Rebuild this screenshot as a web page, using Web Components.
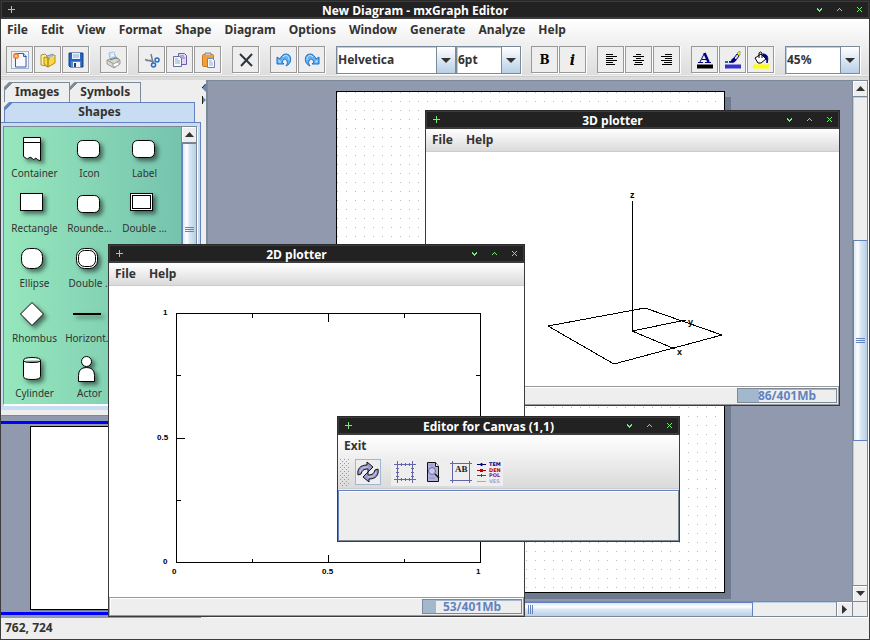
<!DOCTYPE html>
<html lang="en">
<head>
<meta charset="utf-8">
<title>New Diagram - mxGraph Editor</title>
<style>
html, body { margin: 0; height: 100%; overflow: hidden; }
body { font: bold 12px/16px "Noto Sans", "Open Sans", sans-serif; color: #333; background: #eee; position: relative;
  --edge: #3c3c3c; --line: #7a8a99; --blue: #6382bf; --sky: #c8ddf2; --desk: #9099ae; }
#main { height: 100%; }
#plot3d, #plot2d, #canvas { position: absolute; }
#plot3d { left: 425px; top: 110px; width: 415px; height: 296px; }
#plot2d { left: 108px; top: 244px; width: 417px; height: 373px; }
#canvas { left: 337px; top: 416px; width: 343px; height: 126px; }
</style>
</head>
<body>
<mx-window id="main" caption="New Diagram - mxGraph Editor"><mx-editor></mx-editor></mx-window>
<mx-window id="plot3d" caption="3D plotter">
  <mx-menubar items="File,Help" compact></mx-menubar>
  <mx-plot3d></mx-plot3d>
  <mx-memory used="86" total="401"></mx-memory>
</mx-window>
<mx-window id="plot2d" caption="2D plotter">
  <mx-menubar items="File,Help" compact></mx-menubar>
  <mx-plot2d></mx-plot2d>
  <mx-memory used="53" total="401"></mx-memory>
</mx-window>
<mx-window id="canvas" caption="Editor for Canvas (1,1)"><mx-canvas-editor></mx-canvas-editor></mx-window>

<script>
const base = `:host,*{box-sizing:border-box}button{font:inherit;color:inherit;margin:0;padding:0;border:0;background:none}svg{display:block}`;
function define(name, css, html) {
  customElements.define(name, class extends HTMLElement {
    constructor() { super(); this.attachShadow({ mode: "open" }); }
    connectedCallback() {
      const body = typeof html === "function" ? html(this) : html;
      this.shadowRoot.innerHTML = `<style>${base}${css}</style>${body}`;
    }
  });
}

define("mx-window", `
:host{display:flex;flex-direction:column;border:1px solid var(--edge);border-top:0;background:#eee}
header{display:flex;align-items:center;height:19px;flex:none;margin:0 -1px;background:#222;border:1px solid #2a2a2a;border-bottom-color:var(--edge);box-shadow:inset 0 0 0 1px var(--edge);color:#fff}
h1{flex:1;margin:0;font:bold 12px/16px "Open Sans","Noto Sans",sans-serif;text-align:center;padding-top:3px;white-space:nowrap}
button{width:20px;height:17px;display:grid;place-items:center;color:#7be87b}
main{flex:1;min-height:0;display:flex;flex-direction:column}`,
el => {
  const b = (n, d) => `<button aria-label="${n}"><svg width="9" height="9" fill="none" stroke="currentColor" shape-rendering="crispEdges"><path d="${d}"/></svg></button>`;
  return `<header>${b("Stick", "M4.500 1v7M1 4.500h7")}<h1>${el.getAttribute("caption")}</h1>
  ${b("Minimize", "M2 3.500l2.500 2.500l2.500-2.500")}${b("Maximize", "M2 6l2.500-2.500l2.500 2.500")}${b("Close", "M2 2l5 5M7 2l-5 5")}</header><main><slot></slot></main>`;
});

define("mx-menubar", `
:host{display:flex;gap:13px;padding:0 6px;height:22px;align-items:center;flex:none}
:host([compact]){height:23px;background:linear-gradient(#fff,#dadada);border-bottom:1px solid #ccc}
button{white-space:nowrap}`,
el => el.getAttribute("items").split(",").map(t => `<button>${t}</button>`).join(""));

define("mx-memory", `
:host{display:flex;justify-content:flex-end;align-items:center;height:19px;flex:none;border:1px solid #999;border-left-color:#aaa;box-shadow:inset 1px 1px #fff;padding:1px;background:#eee}
div{width:100px;height:15px;border:1px solid var(--line);box-shadow:inset 1px 1px #a3b8cc;color:var(--blue);text-align:center;line-height:14px;}`,
el => {
  const u = +el.getAttribute("used"), t = +el.getAttribute("total"), p = u / t * 100;
  return `<div role="progressbar" aria-label="Memory" aria-valuenow="${u}" aria-valuemax="${t}" style="background:linear-gradient(90deg,#a3b8cc ${p}%,#eee ${p}%)">${u}/${t}Mb</div>`;
});

define("mx-plot3d", `
:host{display:block;flex:1;min-height:0;background:#fff}
svg{width:100%;height:100%}text{font:bold 9px "Liberation Sans",sans-serif}`, `
<svg viewBox="426 152 413 234" fill="none" stroke="#000" shape-rendering="crispEdges">
<path d="M632.500 201V331M548 326L645 308L722 335L614 364ZM632 331L686 320M632 331L675 349"/>
<g fill="#000" stroke="none"><text x="630" y="198">z</text><text x="688" y="325">y</text><text x="677" y="355">x</text></g></svg>`);

define("mx-plot2d", `
:host{display:block;flex:1;min-height:0;background:#fff}
svg{width:100%;height:100%}text{font:bold 8px "Liberation Sans",sans-serif}`, `
<svg viewBox="109 286 415 311" fill="none" stroke="#000" shape-rendering="crispEdges">
<path d="M176.500 313.500h304v249h-304zM252.500 313v5M328.500 313v9M404.500 313v5M252.500 563v-4M328.500 563v-8M404.500 563v-4M176 375.500h5M176 438.500h9M176 500.500h5M481 375.500h-5M481 438.500h-9M481 500.500h-5"/>
<g fill="#000" stroke="none"><text x="163" y="315">1</text><text x="157" y="440">0.5</text><text x="163" y="564">0</text>
<text x="172" y="574">0</text><text x="322" y="574">0.5</text><text x="476" y="574">1</text></g></svg>`);

const icons = {
  "New": `<rect x=".5" y=".5" width="17" height="17" fill="#eef3fa" stroke="#9db2d0"/><path d="M4.500 2.500h8l2.500 2.500v11h-10.500z" fill="#f8faff" stroke="#405a98"/><path d="M12.500 2.500v3h3" fill="#c2d2ee" stroke="#405a98"/><circle cx="5" cy="5" r="3" fill="#f76432" fill-opacity=".85"/><circle cx="5" cy="5" r="1.500" fill="#ffd64a"/>`,
  "Open": `<path d="M2 4l4-1l2 2v10l-6-1z" fill="#fff0a8" stroke="#b28e20"/><path d="M8 5l6-2v9l-6 4z" fill="#aebfd8" stroke="#8392ae"/><path d="M5 6l4 1v9l-4-3zM9 7l2 1l5-4v8l-7 4z" fill="#fbd848" stroke="#b48d12"/><path d="M11 8l4-3" stroke="#fff6ba"/>`,
  "Save": `<path d="M2 2h14v14H3l-1-1z" fill="#2764c0" stroke="#164187"/><rect x="5" y="2" width="8" height="6" fill="#eaf2fc"/><path d="M6 4h6M6 6h6" stroke="#8fa9cc"/><rect x="4" y="10" width="10" height="6" fill="#5b89c8"/><rect x="6" y="11" width="7" height="5" fill="#f4f4f4"/><rect x="7" y="12" width="2" height="4" fill="#173f7f"/>`,
  "Print": `<path d="M5 8l-1-6l5-1l2 6z" fill="#c9e0f8" stroke="#9cc0e4"/><path d="M6 3l3-1M6 5l3-1" stroke="#fff"/><path d="M2 9l9-3l4 3v4l-6 4l-7-4z" fill="#d6d6d2" stroke="#a0a09a"/><path d="M2 9l7 4l6-4M9 13v4" stroke="#9a9a94"/><path d="M7 14l5-3l3 2l-5 3z" fill="#fff" stroke="#aaa"/><path d="M5 9l6-2l2 1" stroke="#777"/>`,
  "Cut": `<path d="M2 8.500l9 2.500M8 3l2 9M3 9.500h5" stroke="#747f89" stroke-width="1.500"/><circle cx="14" cy="9" r="2" stroke="#2769c4" stroke-width="1.500"/><circle cx="10.500" cy="14" r="2" stroke="#2769c4" stroke-width="1.500"/>`,
  "Copy": `<path d="M7.500 2.500h6l2 2v9h-8z" fill="#dcdaf3" stroke="#705ba5"/><path d="M9 5h4M9 7h5" stroke="#8474b4"/><path d="M2.500 5.500h6l2 2v8h-8z" fill="#f6faff" stroke="#5b70a5"/><path d="M4 8h3M4 10h5M4 12h5" stroke="#91a5ca"/>`,
  "Paste": `<rect x="3.500" y="3.500" width="11" height="12" rx="1" fill="#f0a13c" stroke="#c87a25"/><path d="M6 4V2h6v2" fill="#ccc" stroke="#888"/><path d="M8.500 7.500h5l2 2v7h-7z" fill="#f4f8ff" stroke="#6d84ab"/><path d="M10 10h3M10 12h4M10 14h4" stroke="#9bb0d0"/>`,
  "Delete": `<path d="M3 3l12 12M15 3L4 15" stroke="#2d353d" stroke-width="2"/>`,
  "Undo": `<path d="M2 6v7h7l-2-2c1-3 4-4 5-1c1 2 0 3-1 5c5-2 6-8 3-11c-3-2-7-1-9 4z" fill="#62b1f4" stroke="#1c6fc2"/><path d="M4 9v2h2M8 6c3-3 6-1 6 3" stroke="#c4e6ff"/>`,
  "Redo": `<path d="M16 6v7H9l2-2c-1-3-4-4-5-1c-1 2 0 3 1 5c-5-2-6-8-3-11c3-2 7-1 9 4z" fill="#62b1f4" stroke="#1c6fc2"/><path d="M14 9v2h-2M10 6C7 3 4 5 4 9" stroke="#c4e6ff"/>`,
  "Align left": `<path d="M4 3.500h7M4 5.500h11M4 7.500h7M4 9.500h11M4 11.500h7M4 13.500h9" stroke="#000" shape-rendering="crispEdges"/>`,
  "Align center": `<path d="M6 3.500h5M3 5.500h11M6 7.500h5M3 9.500h11M5 11.500h7M4 13.500h9" stroke="#000" shape-rendering="crispEdges"/>`,
  "Align right": `<path d="M7 3.500h7M3 5.500h11M7 7.500h7M3 9.500h11M6 11.500h8M4 13.500h10" stroke="#000" shape-rendering="crispEdges"/>`,
  "Font color": `<path d="M1 13.500h16v4H1z" fill="#000"/><path d="M2 11.500h5M9 11.500h6M4 11L8.500 2M6 8.500h5" stroke="#000080"/><path d="M8.500 2L12.500 11" stroke="#000080" stroke-width="2.500"/>`,
  "Line color": `<path d="M1 13.500h16v4H1z" fill="#3333cc"/><path d="M1 11h3" stroke="#008080" stroke-width="2"/><path d="M5 11c3 0 2-3 5-4l2 2c-1 2-3 3-7 2z" fill="#000080" stroke="#000080"/><path d="M10 7l3-4l2 2l-3 4z" fill="#ddd" stroke="#000080"/><path d="M13 2l3-2v4l-1 1z" fill="#ff0" stroke="#665f00" stroke-width=".5"/>`,
  "Fill color": `<path d="M1 13.500h16v4H1z" fill="#ff0"/><path d="M3 7l6-4l5 5l-5 4h-3z" fill="#fff" stroke="#000"/><path d="M7 7V2q1.500-2 3 0v5" stroke="#000"/><path d="M11 3c4 0 6 3 4 9c0-4-1-5-4-7z" fill="#000080" stroke="#000080"/>`
};
define("mx-tool", `
:host{display:block;flex:none}
button{width:27px;height:27px;display:grid;place-items:center;border:1px solid #999;background:#eee;box-shadow:1px 1px #fff;color:#000}
b,i{font:bold 12px/16px "DejaVu Serif",serif;color:#000}i{font-style:italic;font-size:14px}`,
el => {
  const n = el.getAttribute("name");
  const art = n === "Bold" ? `<b>B</b>` : n === "Italic" ? `<i>i</i>` : `<svg width="18" height="18" fill="none">${icons[n]}</svg>`;
  return `<button aria-label="${n}">${art}</button>`;
});

define("mx-combo", `
:host{display:grid;height:28px;flex:none}
select{grid-area:1/1;appearance:none;width:100%;height:28px;border:1px solid var(--line);border-radius:0;background:#fff;box-shadow:inset 1px 1px #b8cfe5,1px 1px #fff;font:inherit;color:#333;padding:0 0 0 1px;margin:0}
span{grid-area:1/1;justify-self:end;width:20px;margin:1px 0;border:solid var(--line);border-width:0 1px;background:linear-gradient(#fff,#dbe7f3 50%,#b8cfe5);display:grid;place-items:center;pointer-events:none}`,
el => `<select aria-label="${el.getAttribute("name")}"><option>${el.getAttribute("value")}</option></select><span><svg width="10" height="5"><path d="M0 0h10l-5 5z" fill="#333"/></svg></span>`);

define("mx-scrollbar", `
:host{display:flex;flex-direction:column;width:15px;flex:none;border-left:1px solid var(--line);background:#eee}
:host([horizontal]){flex-direction:row;width:auto;height:15px;border-left:0;border-top:1px solid var(--line)}
button{width:14px;height:15px;display:grid;place-items:center;background:#eee;box-shadow:inset 1px 1px #fff;flex:none}
:host([horizontal]) button{width:15px;height:14px}
.t{flex:1;display:flex;flex-direction:inherit;border:1px solid var(--line);border-width:1px 0;box-shadow:inset 1px 1px #b8cfe5;min-height:0}
:host([horizontal]) .t{border-width:0 1px}
.th{border:1px solid var(--blue);border-right:0;background:linear-gradient(90deg,#dce8f4,#fff 30%,#dbe7f3 50%,#b8cfe5);display:grid;place-items:center;color:var(--blue)}
:host([horizontal]) .th{border:1px solid var(--blue);border-bottom:0;background:linear-gradient(#dce8f4,#fff 30%,#dbe7f3 50%,#b8cfe5)}
`,
el => {
  const h = el.hasAttribute("horizontal"), a = +el.getAttribute("before"), s = +el.getAttribute("size"), z = +el.getAttribute("after");
  const btn = (n, d) => `<button aria-label="${n}"><svg width="9" height="9" fill="#333"><path d="${d}"/></svg></button>`;
  return (h ? btn("Left", "M7 0v9l-5-4.500z") : btn("Up", "M0 7h9l-4.500-5z"))
   + `<div class="t"><div style="flex:${a}"></div><div class="th" style="flex:${s}"><svg width="9" height="9" stroke="currentColor" shape-rendering="crispEdges"><path d="${h ? "M2.500 0v9M4.500 0v9M6.500 0v9" : "M0 2.500h9M0 4.500h9M0 6.500h9"}"/></svg></div><div style="flex:${z}"></div></div>`
   + (h ? btn("Right", "M2 0v9l5-4.500z") : btn("Down", "M0 2h9l-4.500 5z"));
});

const rect = `<rect x="6.500" y="5.500" width="22" height="17"/>`, round = `<rect x="8.500" y="7.500" width="22" height="17" rx="5"/>`;
const shapes = {
  container: ["Container", `<path d="M9.500 4.500h17v23c-2 0-3-1-4-2s-2 1-3 1s-2-3-4-2s-2 2-3 1s-2-1-3-2zM9.500 9.500h17"/>`],
  icon: ["Icon", round],
  label: ["Label", round],
  rectangle: ["Rectangle", rect],
  rounded: ["Rounde...", round],
  doubleRectangle: ["Double ...", rect + `<rect x="8.500" y="7.500" width="18" height="13"/>`],
  ellipse: ["Ellipse", `<rect x="7.500" y="5.500" width="21" height="20" rx="8"/>`],
  doubleEllipse: ["Double ..", `<rect x="7.500" y="5.500" width="21" height="20" rx="8"/><rect x="9.500" y="7.500" width="17" height="16" rx="6"/>`],
  rhombus: ["Rhombus", `<path d="M18 4.500l11.500 11.500l-11.500 11.500l-11.500-11.500z"/>`],
  line: ["Horizont...", `<path d="M4 16h28" stroke-width="2"/>`],
  cylinder: ["Cylinder", `<path d="M9.500 7.500q0-3 8.500-3t8.500 3v16q0 3-8.500 3t-8.500-3zM9.500 7.500q0 2 8.500 2t8.500-2"/>`],
  actor: ["Actor", `<path d="M9.500 28.500v-6q0-8 8-8t8 8v6z"/><circle cx="17.500" cy="8.500" r="5"/>`]
};
const rows = [["container", "icon", "label"], ["rectangle", "rounded", "doubleRectangle"], ["ellipse", "doubleEllipse"], ["rhombus", "line"], ["cylinder", "actor"]];
define("mx-shape", `
:host{display:grid;justify-items:center;grid-template-rows:32px 16px;font-weight:normal;font-size:10px;line-height:16px}
svg{filter:drop-shadow(3px 3px 2px rgba(0,0,0,.5));margin-right:5px}span{white-space:nowrap}`,
el => {
  const [label, art] = shapes[el.getAttribute("kind")];
  return `<svg width="36" height="32" fill="#fff" stroke="#000">${art}</svg><span>${label}</span>`;
});

define("mx-library", `
:host{display:flex;flex-direction:column;min-height:0}
.tabs{display:flex;padding:2px 0 0 3px}
button{height:20px;padding:0 10px 1px;border:1px solid var(--line);border-bottom:0;margin-right:-1px;background:linear-gradient(135deg,var(--line) 5px,#eee 5px)}
.sel{margin:0 6px 0 3px;border-color:var(--blue);background:linear-gradient(135deg,var(--blue) 5px,var(--sky) 5px)}
.tabs button,.sel{clip-path:polygon(5px 0,100% 0,100% 100%,0 100%,0 5px)}
.pane{flex:1;min-height:0;display:flex;border:1px solid var(--blue);border-width:1px 1px 0 0;background:var(--sky);padding:3px 3px 5px 2px}
.view{flex:1;min-width:0;display:flex;border:1px solid var(--line);border-bottom-color:#fff;box-shadow:1px 1px #fff}
.grid{flex:1;min-width:0;overflow:hidden;display:flex;flex-direction:column;padding:6px 3px 0;background:linear-gradient(90deg,#96e7bd,#76c3ae)}
.row{display:grid;grid-template-columns:repeat(3,55px);height:55px;flex:none}`,
`<div class="tabs" role="tablist"><button role="tab">Images</button><button role="tab">Symbols</button></div>
<button class="sel" role="tab" aria-selected="true">Shapes</button>
<div class="pane"><div class="view"><div class="grid">${rows.map(r => `<div class="row">${r.map(k => `<mx-shape kind="${k}"></mx-shape>`).join("")}</div>`).join("")}</div>
<mx-scrollbar before="0" size="174" after="73"></mx-scrollbar></div></div>`);

define("mx-outline", `
:host{display:flex;flex-direction:column;background:var(--desk);border-top:1px solid var(--line);padding:5px 0 3px}
.v{flex:1;display:flex;border:solid #00f;border-width:3px 0;padding:2px 30px 2px 29px}
.p{flex:1;background:#fff;border:1px solid #000;box-shadow:2px 1px #6f7a8e}`,
`<div class="v"><div class="p"></div></div>`);

const tools = [["New", "Open", "Save"], ["Print"], ["Cut", "Copy", "Paste"], ["Delete"], ["Undo", "Redo"], null, ["Bold", "Italic"], ["Align left", "Align center", "Align right"], ["Font color", "Line color", "Fill color"]];
define("mx-editor", `
:host{display:flex;flex-direction:column;flex:1;min-height:0}
.top{background:linear-gradient(#fff,#dadada);padding-bottom:3px;border-bottom:0}
.bar{display:flex;gap:11px;padding:5px 5px 2px;border-bottom:1px solid #ccc;box-shadow:inset 0 -1px #eee}
.bar>div{display:flex;gap:1px}
.bar .c{margin:0 -1px 0 0}
.body{flex:1;min-height:0;display:grid;grid-template-columns:200px 5px 1fr}
.left{display:grid;grid-template-rows:1fr 5px 203px;min-height:0}
.div{display:flex;flex-direction:column;padding:4px 0;gap:4px}
.div button{width:5px;height:8px}
.right{display:grid;grid-template-columns:1fr 15px;grid-template-rows:1fr 15px;border:1px solid var(--line);margin:0 1px 1px 0;min-height:0;box-shadow:1px 1px #fff}
.desk{background:var(--desk);border-left:1px solid var(--line);padding:10px 127px 8px 128px;display:flex;min-width:0}
.page{flex:1;border:1px solid #000;background:#fff conic-gradient(from 270deg at 1px 1px,#bbb 90deg,transparent 0) 0 0/9px 9px;box-shadow:6px 6px #6f7a8e}
.status{height:21px;padding:2px 4px;line-height:16px;flex:none}`,
`<div class="top"><mx-menubar items="File,Edit,View,Format,Shape,Diagram,Options,Window,Generate,Analyze,Help"></mx-menubar>
<div class="bar">${tools.map(g => g ? `<div>${g.map(t => `<mx-tool name="${t}"></mx-tool>`).join("")}</div>` :
 `<div class="c"><mx-combo name="Font" value="Helvetica" style="width:120px"></mx-combo><mx-combo name="Size" value="6pt" style="width:65px;margin-left:-1px"></mx-combo></div>`).join("")}
<div><mx-combo name="Zoom" value="45%" style="width:75px"></mx-combo></div></div></div>
<div class="body"><div class="left"><mx-library></mx-library><div></div><mx-outline></mx-outline></div>
<div class="div"><button aria-label="Collapse"><svg width="5" height="8"><path d="M5 0v8L1 4z" fill="#6382bf"/><path d="M4.500 0L1 4" stroke="#222"/></svg></button><button aria-label="Expand"><svg width="5" height="8"><path d="M1 0v8l4-4z" fill="#6382bf"/><path d="M1.500 0v8" stroke="#222"/></svg></button></div>
<div class="right"><div class="desk"><div class="page"></div></div><mx-scrollbar before="144" size="200" after="145"></mx-scrollbar>
<mx-scrollbar horizontal before="86" size="447" after="84"></mx-scrollbar><div style="border:solid var(--line);border-width:1px 0 0 1px"></div></div></div>
<div class="status">762, 724</div>`);

define("mx-canvas-editor", `
:host{display:flex;flex-direction:column;flex:1}
.top{background:linear-gradient(#fff,#dadada);border-bottom:1px solid #ccc}
.bar{display:flex;padding:0 2px 1px;height:31px;align-items:center}
.grip{width:10px;height:27px;background:conic-gradient(from 270deg at 1px 1px,#999 90deg,transparent 0) 0 0/4px 4px,conic-gradient(from 270deg at 1px 1px,#999 90deg,transparent 0) 2px 2px/4px 4px;margin-right:5px}
.bar button{width:28px;height:28px;display:grid;place-items:center;background:#eee}
.bar .on{width:26px;height:26px;border:1px solid #9fb7d0;margin-right:10px}
.area{flex:1;border:1px solid var(--line);border-color:var(--blue) var(--line) var(--line) var(--blue);margin-top:1px;box-shadow:inset 0 1px #fff}
text{font:bold 9px "Liberation Serif",serif}.k text{font:bold 5px "DejaVu Sans",sans-serif}`,
`<div class="top"><mx-menubar items="Exit"></mx-menubar><div class="bar"><span class="grip"></span>
<button class="on" aria-label="Refresh"><svg width="22" height="22" fill="#9a9acb" stroke="#111"><path d="M4 13l-3 1c-1-6 2-10 9-10V1l6 5l-5 5V8c-5 0-6 2-7 5z"/><path d="M18 9l3-1c1 6-2 10-9 10v3l-6-5l5-5v3c5 0 6-2 7-5z"/><path d="M3 11q1-5 8-5M19 11q-1 5-8 5" fill="none" stroke="#ccccf0"/></svg></button>
<button aria-label="Axes"><svg width="22" height="22" fill="none" stroke="#6464a8" shape-rendering="crispEdges"><path d="M3.500 0v22M18.500 0v22M0 3.500h22M0 18.500h22"/><path d="M7.500 2v3M11.500 2v3M15.500 2v3M7.500 17v3M11.500 17v3M15.500 17v3M2 7.500h3M2 11.500h3M2 15.500h3M17 7.500h3M17 11.500h3M17 15.500h3"/></svg></button>
<button aria-label="Preview"><svg width="14" height="22" fill="#b2b2dc" stroke="#111"><path d="M1.500 1.500h8l3 4v15h-11z"/><path d="M9.500 1.500v4h3" fill="#fff"/><circle cx="6" cy="10" r="3.500" fill="#c8c8ec" stroke="#6464a8"/><path d="M9 13l4 4" stroke-width="1.500"/><path d="M3 17h6M3 4h4" stroke="#8c8cc4"/></svg></button>
<button aria-label="Labels"><svg width="22" height="22" fill="none" stroke="#6464a8" shape-rendering="crispEdges"><path d="M2.500 0v22M19.500 0v22M0 2.500h22M0 19.500h22"/><text x="5" y="11" fill="#222" stroke="none">AB</text></svg></button>
<button aria-label="Legend"><svg class="k" width="24" height="22" stroke-width="1"><g stroke="#000080" fill="#000080"><path d="M0 3.500h9M4.500 2v3"/><circle cx="4.500" cy="3.500" r="1"/></g><g stroke="#c00000" fill="#c00000"><path d="M0 9.500h9"/><rect x="3.500" y="8.500" width="2" height="2"/></g><g stroke="#8b1a8b"><path d="M0 14.500h9M4.500 13v3"/></g><path d="M0 20.500h9" stroke="#a6a6cf"/>
<g stroke="none"><text x="12" y="5" fill="#000080">TEM</text><text x="12" y="11" fill="#c00000">DEN</text><text x="12" y="16" fill="#8b1a8b">POL</text><text x="12" y="22" fill="#a6a6cf">VES</text></g></svg></button>
</div></div><div class="area"></div>`);
</script>
</body>
</html>
